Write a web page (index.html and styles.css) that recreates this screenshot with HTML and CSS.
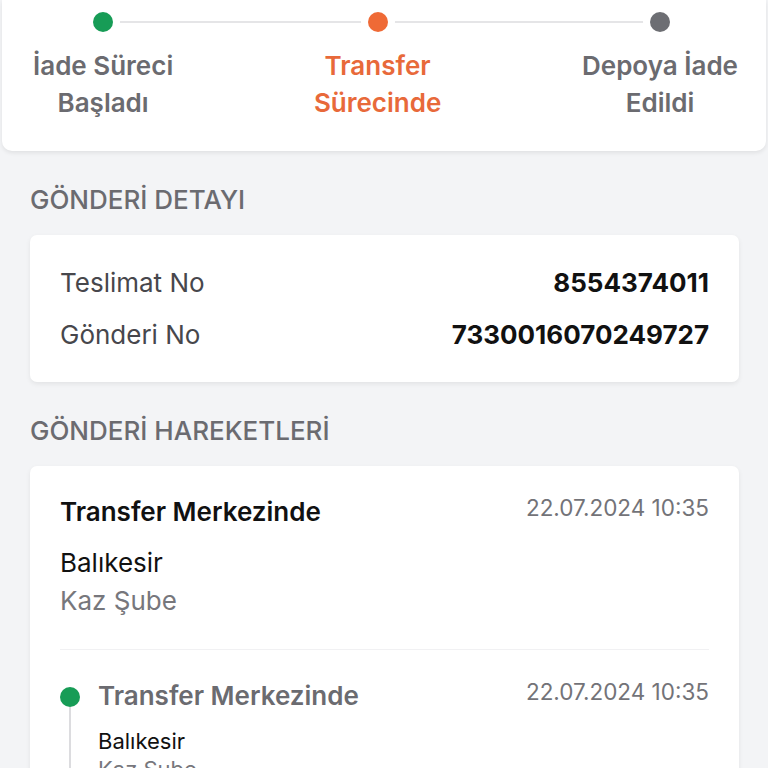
FILE: index.html
```html
<!DOCTYPE html>
<html lang="tr">
<head>
<meta charset="utf-8">
<link rel="stylesheet" href="styles.css">
</head>
<body>
<div class="page">
  <div class="status-card">
    <div class="track">
      <div class="step step-done">
        <span class="dot"></span>
        <span class="label">İade Süreci<br>Başladı</span>
      </div>
      <div class="step step-active">
        <span class="dot"></span>
        <span class="label">Transfer<br>Sürecinde</span>
      </div>
      <div class="step step-todo">
        <span class="dot"></span>
        <span class="label">Depoya İade<br>Edildi</span>
      </div>
    </div>
  </div>

  <h2 class="section-title">GÖNDERİ DETAYI</h2>
  <div class="card detail-card">
    <div class="row"><span class="key">Teslimat No</span><span class="val">8554374011</span></div>
    <div class="row"><span class="key">Gönderi No</span><span class="val">7330016070249727</span></div>
  </div>

  <h2 class="section-title">GÖNDERİ HAREKETLERİ</h2>
  <div class="card moves-card">
    <div class="move-head">
      <div class="move-top">
        <span class="move-title">Transfer Merkezinde</span>
        <span class="move-date">22.07.2024 10:35</span>
      </div>
      <div class="move-city">Balıkesir</div>
      <div class="move-branch">Kaz Şube</div>
    </div>
    <div class="timeline">
      <div class="tl-item">
        <div class="tl-rail"><span class="tl-dot"></span><span class="tl-line"></span></div>
        <div class="tl-body">
          <div class="move-top">
            <span class="tl-title">Transfer Merkezinde</span>
            <span class="move-date">22.07.2024 10:35</span>
          </div>
          <div class="tl-city">Balıkesir</div>
          <div class="tl-branch">Kaz Şube</div>
        </div>
      </div>
    </div>
  </div>
</div>
</body>
</html>
```

FILE: styles.css
```css
* { box-sizing: border-box; }
html, body { margin: 0; padding: 0; }
body {
  background: #f3f4f6;
  font-family: Inter, "Noto Sans", sans-serif;
  color: #111;
  width: 768px;
  height: 768px;
  overflow: hidden;
}
.page { display: flex; flex-direction: column; }

.status-card {
  background: #fff;
  margin: 0 2px;
  border-radius: 0 0 10px 10px;
  box-shadow: 0 2px 4px rgba(0,0,0,0.08);
  padding: 12px 0 0;
  height: 151px;
}
.track {
  display: flex;
  justify-content: space-between;
  position: relative;
  padding: 0 28px 0 31px;
}
.track::before {
  content: "";
  position: absolute;
  top: 9px;
  left: 101px;
  right: 106px;
  height: 2px;
  background: #e5e5e7;
}
.step {
  display: flex;
  flex-direction: column;
  align-items: center;
  position: relative;
}
.step .dot {
  width: 20px; height: 20px; border-radius: 50%;
  position: relative; z-index: 1;
  box-shadow: 0 0 0 7px #fff;
}
.step .label {
  margin-top: 15px;
  text-align: center;
  font-size: 26px;
  font-weight: 600;
  line-height: 37px;
  color: #6b6b70;
}
.step-done .dot { background: #179c56; }
.step-active .dot { background: #ef6a36; }
.step-active .label { color: #e8693a; }
.step-todo .dot { background: #6d6e73; }

.section-title {
  margin: 0;
  padding: 34px 30px 20px;
  font-size: 26px;
  font-weight: 500;
  color: #6b6b70;
  line-height: 30px;
}
.card {
  background: #fff;
  margin: 0 29px 0 30px;
  border-radius: 7px;
  box-shadow: 0 2px 5px rgba(0,0,0,0.07);
}
.detail-card {
  padding: 33px 30px 32px;
  display: flex;
  flex-direction: column;
  gap: 22px;
}
.row {
  display: flex;
  justify-content: space-between;
  align-items: center;
  line-height: 30px;
  font-size: 26px;
}
.key { color: #47474c; }
.val { font-weight: 700; color: #111; }

.moves-card { padding: 30px 30px 0; }
.move-head {
  padding-bottom: 29px;
  border-bottom: 1px solid #f1f1f3;
}
.move-top {
  display: flex;
  justify-content: space-between;
  align-items: flex-start;
}
.move-title {
  font-size: 26px;
  font-weight: 600;
  line-height: 32px;
  color: #111;
}
.move-date {
  font-size: 22.5px;
  color: #737378;
  line-height: 24px;
}
.move-city {
  margin-top: 16px;
  font-size: 26px;
  line-height: 38px;
  color: #111;
}
.move-branch {
  font-size: 26px;
  line-height: 38px;
  color: #77777c;
}
.timeline { padding-top: 30px; }
.tl-item { display: flex; gap: 18px; }
.tl-rail {
  display: flex; flex-direction: column; align-items: center;
  width: 20px; padding-top: 7px;
}
.tl-dot { width: 20px; height: 20px; border-radius: 50%; background: #179c56; }
.tl-line { width: 2px; flex: 1; background: #dcdcdf; min-height: 80px; }
.tl-body { flex: 1; }
.tl-title {
  font-size: 26px;
  font-weight: 600;
  line-height: 32px;
  color: #6b6b70;
}
.tl-city {
  margin-top: 15px;
  font-size: 22px;
  line-height: 28px;
  color: #111;
}
.tl-branch {
  font-size: 22px;
  line-height: 28px;
  color: #77777c;
}
```
